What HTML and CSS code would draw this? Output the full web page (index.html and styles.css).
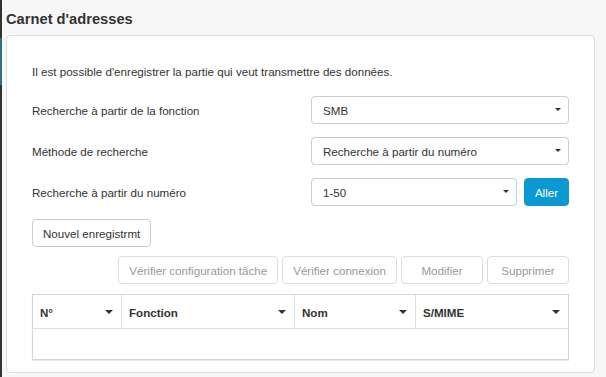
FILE: index.html
```html
<!DOCTYPE html>
<html lang="fr">
<head>
    <meta charset="UTF-8">
    <meta name="viewport" content="width=device-width, initial-scale=1.0">
    <title>Carnet d'adresses</title>
    <link rel="stylesheet" href="styles.css">
</head>
<body>
    <div class="side-edge"><div class="side-active"></div></div>

    <div class="main">
        <h1 class="page-title">Carnet d'adresses</h1>

        <div class="panel">
            <p class="intro">Il est possible d'enregistrer la partie qui veut transmettre des données.</p>

            <div class="form-row">
                <label class="form-label">Recherche à partir de la fonction</label>
                <div class="select-wrap">
                    <select class="select">
                        <option>SMB</option>
                    </select>
                </div>
            </div>

            <div class="form-row">
                <label class="form-label">Méthode de recherche</label>
                <div class="select-wrap">
                    <select class="select">
                        <option>Recherche à partir du numéro</option>
                    </select>
                </div>
            </div>

            <div class="form-row">
                <label class="form-label">Recherche à partir du numéro</label>
                <div class="field-group">
                    <div class="select-wrap">
                        <select class="select">
                            <option>1-50</option>
                        </select>
                    </div>
                    <button class="btn btn-primary">Aller</button>
                </div>
            </div>

            <div class="new-row">
                <button class="btn">Nouvel enregistrmt</button>
            </div>

            <div class="actions">
                <button class="btn" disabled>Vérifier configuration tâche</button>
                <button class="btn" disabled>Vérifier connexion</button>
                <button class="btn" disabled>Modifier</button>
                <button class="btn" disabled>Supprimer</button>
            </div>

            <table class="grid">
                <thead>
                    <tr>
                        <th class="col-no"><span>N°</span><i class="caret"></i></th>
                        <th class="col-func"><span>Fonction</span><i class="caret"></i></th>
                        <th class="col-name"><span>Nom</span><i class="caret"></i></th>
                        <th class="col-smime"><span>S/MIME</span><i class="caret"></i></th>
                    </tr>
                </thead>
                <tbody>
                    <tr class="empty-row">
                        <td colspan="4"></td>
                    </tr>
                </tbody>
            </table>
        </div>
    </div>
</body>
</html>
```

FILE: styles.css
```css
* {
    box-sizing: border-box;
}

body {
    margin: 0;
    height: 100vh;
    display: flex;
    font-family: "Liberation Sans", Arial, Helvetica, sans-serif;
    font-size: 11.6px;
    color: #333;
    background-color: #f7f7f7;
    overflow: hidden;
}

/* edge of the navigation menu on the left */
.side-edge {
    width: 2px;
    flex-shrink: 0;
    background-color: #333;
    padding-top: 38px;
}
.side-active {
    height: 47px;
    background-color: #2c6f86;
}

.main {
    flex: 1;
    padding: 0 11px 0 4px;
}

.page-title {
    margin: 0;
    padding: 9px 0 6px;
    font-size: 14.7px;
    line-height: 20px;
    font-weight: bold;
    color: #333;
}

.panel {
    background: #fff;
    border: 1px solid #ddd;
    border-radius: 4px;
    padding: 27px 25px 12px;
}

.intro {
    margin: 0 0 16px;
    line-height: 17px;
}

.form-row {
    display: grid;
    grid-template-columns: 279px 1fr;
    align-items: center;
    margin-bottom: 13px;
}

.form-label {
    line-height: 17px;
}

.field-group {
    display: flex;
    gap: 7px;
}
.field-group .select-wrap {
    flex: 1;
}

.select-wrap {
    position: relative;
}
.select-wrap::after {
    content: "";
    position: absolute;
    right: 8px;
    top: 12px;
    border-left: 3px solid transparent;
    border-right: 3px solid transparent;
    border-top: 3px solid #333;
    pointer-events: none;
}

.select {
    display: block;
    width: 100%;
    height: 28px;
    margin: 0;
    padding: 0 24px 0 11px;
    border: 1px solid #ccc;
    border-radius: 4px;
    background: #fff;
    font-family: inherit;
    font-size: 11.6px;
    color: #333;
    -webkit-appearance: none;
    appearance: none;
}

.btn {
    height: 28px;
    min-width: 82px;
    padding: 0 10px;
    border: 1px solid #ccc;
    border-radius: 4px;
    background: #fff;
    font-family: inherit;
    font-size: 11.6px;
    color: #333;
    cursor: pointer;
}
.btn:disabled {
    color: #999;
    border-color: #ddd;
    cursor: default;
}

.btn-primary {
    min-width: 45px;
    padding: 0 9px;
    background-color: #0c98d0;
    border-color: #0c98d0;
    color: #fff;
}

.new-row {
    margin-top: 1px;
}

.actions {
    display: flex;
    justify-content: flex-end;
    gap: 4px;
    margin-top: 9px;
}

.grid {
    width: 100%;
    margin-top: 10px;
    border-collapse: collapse;
    border: 1px solid #d4d4d4;
    box-shadow: 0 1px 1px rgba(0, 0, 0, 0.08);
    table-layout: fixed;
}

.grid th {
    height: 34px;
    padding: 2px 8px 0 7px;
    border-right: 1px solid #ddd;
    border-bottom: 1px solid #ddd;
    text-align: left;
    font-weight: bold;
    font-size: 11.6px;
}
.grid th:last-child {
    border-right: none;
}
.grid th span {
    float: left;
}
.grid .caret {
    float: right;
    margin-top: 4px;
    border-left: 4px solid transparent;
    border-right: 4px solid transparent;
    border-top: 4px solid #333;
}

.col-no { width: 89px; }
.col-func { width: 173px; }
.col-name { width: 121px; }

.empty-row td {
    height: 31px;
}
```
